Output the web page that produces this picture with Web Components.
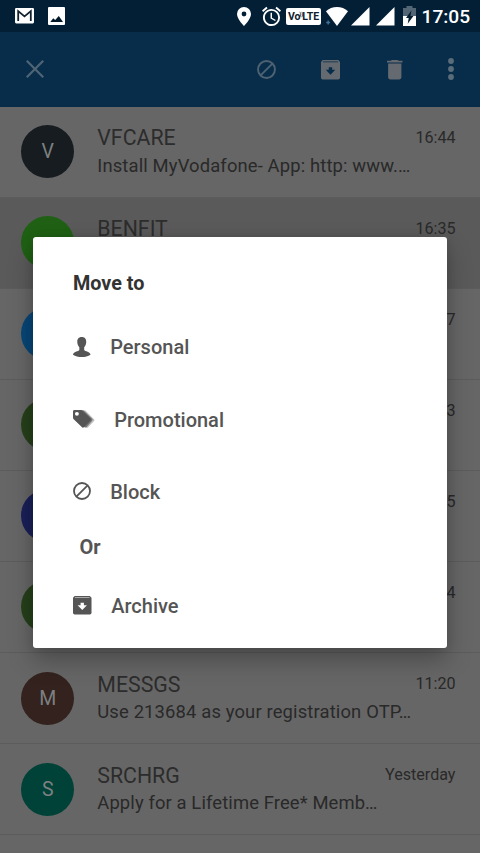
<!DOCTYPE html>
<html lang="en">
<head>
<meta charset="utf-8">
<title>Messages</title>
<style>
html,body{margin:0;padding:0;height:853px;overflow:hidden;background:#666}
body{font-family:Roboto,"Noto Sans",sans-serif}
</style>
</head>
<body>
<sms-app></sms-app>
<script>
const ICONS = {
  mail: ['0 0 19 16', '<rect width="19" height="16" rx="1.2" fill="#fff"/><path d="M3.2 13.5V3.3L9.5 8.6 15.8 3.3V13.5" fill="none" stroke="#10202c" stroke-width="1.8"/>'],
  photo: ['0 0 17 18', '<rect width="17" height="18" rx="1" fill="#fff"/><path d="M2.3 15 5.2 11.2 7.2 12.9 10.8 9 15 15Z" fill="#03192a"/>'],
  pin: ['0 0 14 19', '<path fill-rule="evenodd" d="M7 0a7 7 0 0 0-7 7c0 5 7 12 7 12s7-7 7-12a7 7 0 0 0-7-7Zm0 4.6a2.4 2.4 0 1 1 0 4.8 2.4 2.4 0 0 1 0-4.8Z"/>'],
  alarm: ['2 2 20 20', '<path d="M22 5.72l-4.6-3.86-1.29 1.53 4.6 3.86L22 5.72zM7.88 3.39L6.6 1.86 2 5.71l1.29 1.53 4.59-3.85zM12.5 8H11v6l4.75 2.85.75-1.23-4-2.37V8zM12 4c-4.97 0-9 4.03-9 9s4.02 9 9 9a9 9 0 0 0 0-18zm0 16c-3.87 0-7-3.13-7-7s3.13-7 7-7 7 3.13 7 7-3.13 7-7 7z"/>'],
  wifi: ['0 0 24 19', '<path d="M1 4.3C7-1.4 18-1.4 24 4.3L12.5 19Z"/><path d="M3.3 13.5v4M1.3 15.5h4" stroke="#3f7195" stroke-width="1.5"/>'],
  signal: ['0 0 19 19', '<path d="M0 19 19 0V19Z"/>'],
  battery: ['0 0 13 20', '<path d="M3.5 0h6v2H13v9H0V2h3.5Z" fill="#526675"/><path d="M0 10h13v10H0Z"/><path d="M8.4 4.5 3 12h2.7l-1 5.8L10.4 10H7.5Z" fill="#031d31"/>'],
  close: ['5 5 14 14', '<path d="M19 6.2 17.8 5 12 10.8 6.2 5 5 6.2 10.8 12 5 17.8 6.2 19 12 13.2 17.8 19 19 17.8 13.2 12Z"/>'],
  block: ['0 0 20 20', '<circle cx="10" cy="10" r="8.9" fill="none" stroke="currentColor" stroke-width="2"/><path d="M4 16 16 4" stroke="currentColor" stroke-width="2"/>'],
  archive: ['0 0 20 20', '<path fill-rule="evenodd" d="M1.8 0H18.2L20 2V18.2Q20 20 18.2 20H1.8Q0 20 0 18.2V2ZM2.3 1.6 1.8 2.2h16.400L17.700 1.6ZM8.200 7.4v2.600H5L10 15 15 10H11.800V7.4Z"/>'],
  trash: ['5 3 14 18', '<path d="M6 19c0 1.1.9 2 2 2h8c1.1 0 2-.9 2-2V6.3H6V19zM19 3.8h-3.5l-1-.8h-5l-1 .8H5v1.6h14z"/>'],
  dots: ['0 0 6 22', '<circle cx="3" cy="3" r="2.9"/><circle cx="3" cy="11" r="2.9"/><circle cx="3" cy="19" r="2.9"/>'],
  person: ['0 0 18 21', '<path d="M9 0C5.600 0 4.300 2.200 4.400 5.200c0 2.300 1 4 2.100 5.300v2.800C5.800 14.900 0 14.900 0 18.200 2.500 20 5.500 20.600 9 20.600s6.500-.6 9-2.400c0-3.300-5.800-3.300-6.500-4.900v-2.800c1.100-1.300 2.100-3 2.100-5.300C13.700 2.200 12.400 0 9 0Z"/>'],
  tags: ['0 0 22 20', '<path d="M8 .5h4.600L21.500 9.700q1 1 0 2L15 18.600 12 18.500Z" opacity=".4"/><path d="M8 .3h2.600L19.500 9.300q1 1 0 2L13.500 18.500 11 18Z" opacity=".7"/><path fill-rule="evenodd" d="M0 1.500Q0 0 1.500 0H8q1 0 1.700.7L17.800 8.800q1.200 1.200 0 2.400L11.400 18q-1.200 1.200-2.400 0L.7 9.700Q0 9 0 8ZM4 2a2 2 0 1 0 0 4 2 2 0 0 0 0-4Z"/>']
};

class UiIcon extends HTMLElement {
  connectedCallback() {
    const [box, body] = ICONS[this.getAttribute('name')];
    this.attachShadow({mode: 'open'}).innerHTML = `<style>
      :host{display:block;flex:none;width:${this.getAttribute('w')}px;height:${this.getAttribute('h')}px}
      svg{display:block;width:100%;height:100%;overflow:visible}</style>
      <svg viewBox="${box}" preserveAspectRatio="none" fill="currentColor">${body}</svg>`;
  }
}
customElements.define('ui-icon', UiIcon);

class StatusBar extends HTMLElement {
  constructor() {
    super();
    this.attachShadow({mode: 'open'}).innerHTML = `<style>
      :host{display:flex;align-items:center;height:32px;box-sizing:border-box;padding:0 12px 0 14.500px;background:#021f35;color:#fff}
      .left,.right{display:flex;align-items:center}
      .left{gap:14px}
      .right{margin-left:auto}
      .volte{display:flex;align-items:center;justify-content:center;width:35px;height:17px;border-radius:2px;background:#fff;color:#10202c;font:700 10.500px/17px Roboto,sans-serif;letter-spacing:-.1px;margin:0 4px 0 5px}
      .volte sup{font-size:6px;line-height:6px;margin:-5px -1px 0 -1px}
      .time{font-size:19.200px;font-weight:500;line-height:32px;width:46.500px;margin-left:6px;white-space:nowrap;padding-top:1px}
    </style>
    <div class="left"><ui-icon name="mail" w="19" h="15.500"></ui-icon><ui-icon name="photo" w="17" h="18"></ui-icon></div>
    <div class="right">
      <ui-icon name="pin" w="14" h="19" style="margin-right:11px"></ui-icon>
      <ui-icon name="alarm" w="19" h="19"></ui-icon>
      <span class="volte">Vo<sup>))</sup>LTE</span>
      <ui-icon name="wifi" w="23" h="19"></ui-icon>
      <ui-icon name="signal" w="18.500" h="18.500" style="margin-left:3px"></ui-icon>
      <ui-icon name="signal" w="18.500" h="18.500" style="margin-left:6.500px"></ui-icon>
      <ui-icon name="battery" w="13" h="20" style="margin-left:8px"></ui-icon>
      <span class="time">17:05</span>
    </div>`;
  }
}
customElements.define('status-bar', StatusBar);

class ActionBar extends HTMLElement {
  constructor() {
    super();
    this.attachShadow({mode: 'open'}).innerHTML = `<style>
      :host{display:flex;align-items:center;height:74.500px;box-sizing:border-box;padding:0 26.500px 0 25.500px;background:#072d4a;color:#646a70}
      .actions{display:flex;align-items:center;margin-left:auto}
    </style>
    <ui-icon name="close" w="18" h="18" style="color:#506475"></ui-icon>
    <div class="actions">
      <ui-icon name="block" w="19" h="19" style="margin-right:45px;color:#4e6272"></ui-icon>
      <ui-icon name="archive" w="19" h="19.500" style="margin-right:47px"></ui-icon>
      <ui-icon name="trash" w="15.500" h="19.500" style="margin-right:45px"></ui-icon>
      <ui-icon name="dots" w="6" h="22" style="color:#5a6c7a"></ui-icon>
    </div>`;
  }
}
customElements.define('action-bar', ActionBar);

class MessageRow extends HTMLElement {
  connectedCallback() {
    const a = n => this.getAttribute(n) || '';
    this.attachShadow({mode: 'open'}).innerHTML = `<style>
      :host{display:grid;grid-template-columns:53px 1fr auto;column-gap:23px;height:91.100px;box-sizing:border-box;padding:0 24.500px 0 21.300px;border-bottom:1.500px solid #5c5c5c;color:#292929;align-items:start}
      :host([selected]){background:#5a5a5a}
      .avatar{width:53px;height:53px;margin-top:18.500px;border-radius:50%;background:${a('tone')};color:#7c8082;display:flex;align-items:center;justify-content:center;font-size:19.500px}
      .name{font-size:21.300px;line-height:26px;margin-top:18.500px;white-space:nowrap;color:#2c2c2c}
      .text{font-size:18.400px;letter-spacing:${a('ls') || 0}px;line-height:26px;margin-top:1.500px;white-space:nowrap}
      .body{width:0}
      .time{font-size:16.100px;line-height:24px;margin-top:19px;white-space:nowrap}
    </style>
    <div class="avatar">${a('initial')}</div>
    <div class="body"><div class="name">${a('name')}</div><div class="text"><slot></slot></div></div>
    <div class="time">${a('time')}</div>`;
  }
}
customElements.define('message-row', MessageRow);

class MenuRow extends HTMLElement {
  connectedCallback() {
    this.attachShadow({mode: 'open'}).innerHTML = `<style>
      :host{display:flex;align-items:center;height:72.500px;padding-left:39.700px;font-size:20px;font-weight:500;color:#555;white-space:nowrap}
      .icon{flex:none;width:var(--icon-col,37.500px)}
    </style><div class="icon"><slot name="icon"></slot></div><slot></slot>`;
  }
}
customElements.define('menu-row', MenuRow);

class MoveDialog extends HTMLElement {
  constructor() {
    super();
    this.attachShadow({mode: 'open'}).innerHTML = `<style>
      :host{display:block;position:absolute;left:33px;top:237px;width:413.500px;height:411px;box-sizing:border-box;padding-top:18px;background:#fff;border-radius:3px;box-shadow:0 12px 24px rgba(0,0,0,.28),0 0 8px rgba(0,0,0,.1)}
      h2,p{margin:0;display:flex;align-items:center;font-size:20px;font-weight:700}
      h2{height:56px;padding-left:40px;color:#333;font-size:19.800px}
      p{height:37px;padding-left:46.500px;color:#555}
    </style>
    <h2>Move to</h2>
    <menu-row><ui-icon slot="icon" name="person" w="17.500" h="20.500"></ui-icon>Personal</menu-row>
    <menu-row style="--icon-col:41.500px;height:72px"><ui-icon slot="icon" name="tags" w="21.500" h="19"></ui-icon>Promotional</menu-row>
    <menu-row style="height:73px"><ui-icon slot="icon" name="block" w="18" h="18" style="margin-top:-2px"></ui-icon>Block</menu-row>
    <p>Or</p>
    <menu-row style="height:81px;--icon-col:38.500px"><ui-icon slot="icon" name="archive" w="18.500" h="18.500" style="margin-top:-2px"></ui-icon>Archive</menu-row>`;
  }
}
customElements.define('move-dialog', MoveDialog);

class SmsApp extends HTMLElement {
  constructor() {
    super();
    this.attachShadow({mode: 'open'}).innerHTML = `<style>
      :host{display:block;position:relative;width:480px;height:853px;overflow:hidden;background:#666}
    </style>
    <status-bar></status-bar><action-bar></action-bar>
    <message-row ls=".14" initial="V" tone="#171c20" name="VFCARE" time="16:44">Install MyVodafone- App: http: www.…</message-row>
    <message-row selected tone="#1f6014" name="BENFIT" time="16:35"></message-row>
    <message-row tone="#084676" time="7"></message-row>
    <message-row tone="#26401a" time="3"></message-row>
    <message-row tone="#1a2058" time="5"></message-row>
    <message-row tone="#26401a" time="4"></message-row>
    <message-row ls=".15" initial="M" tone="#33221e" name="MESSGS" time="11:20">Use 213684 as your registration OTP…</message-row>
    <message-row ls=".12" initial="S" tone="#004238" name="SRCHRG" time="Yesterday">Apply for a Lifetime Free* Memb…</message-row>
    <move-dialog></move-dialog>`;
  }
}
customElements.define('sms-app', SmsApp);
</script>
</body>
</html>
